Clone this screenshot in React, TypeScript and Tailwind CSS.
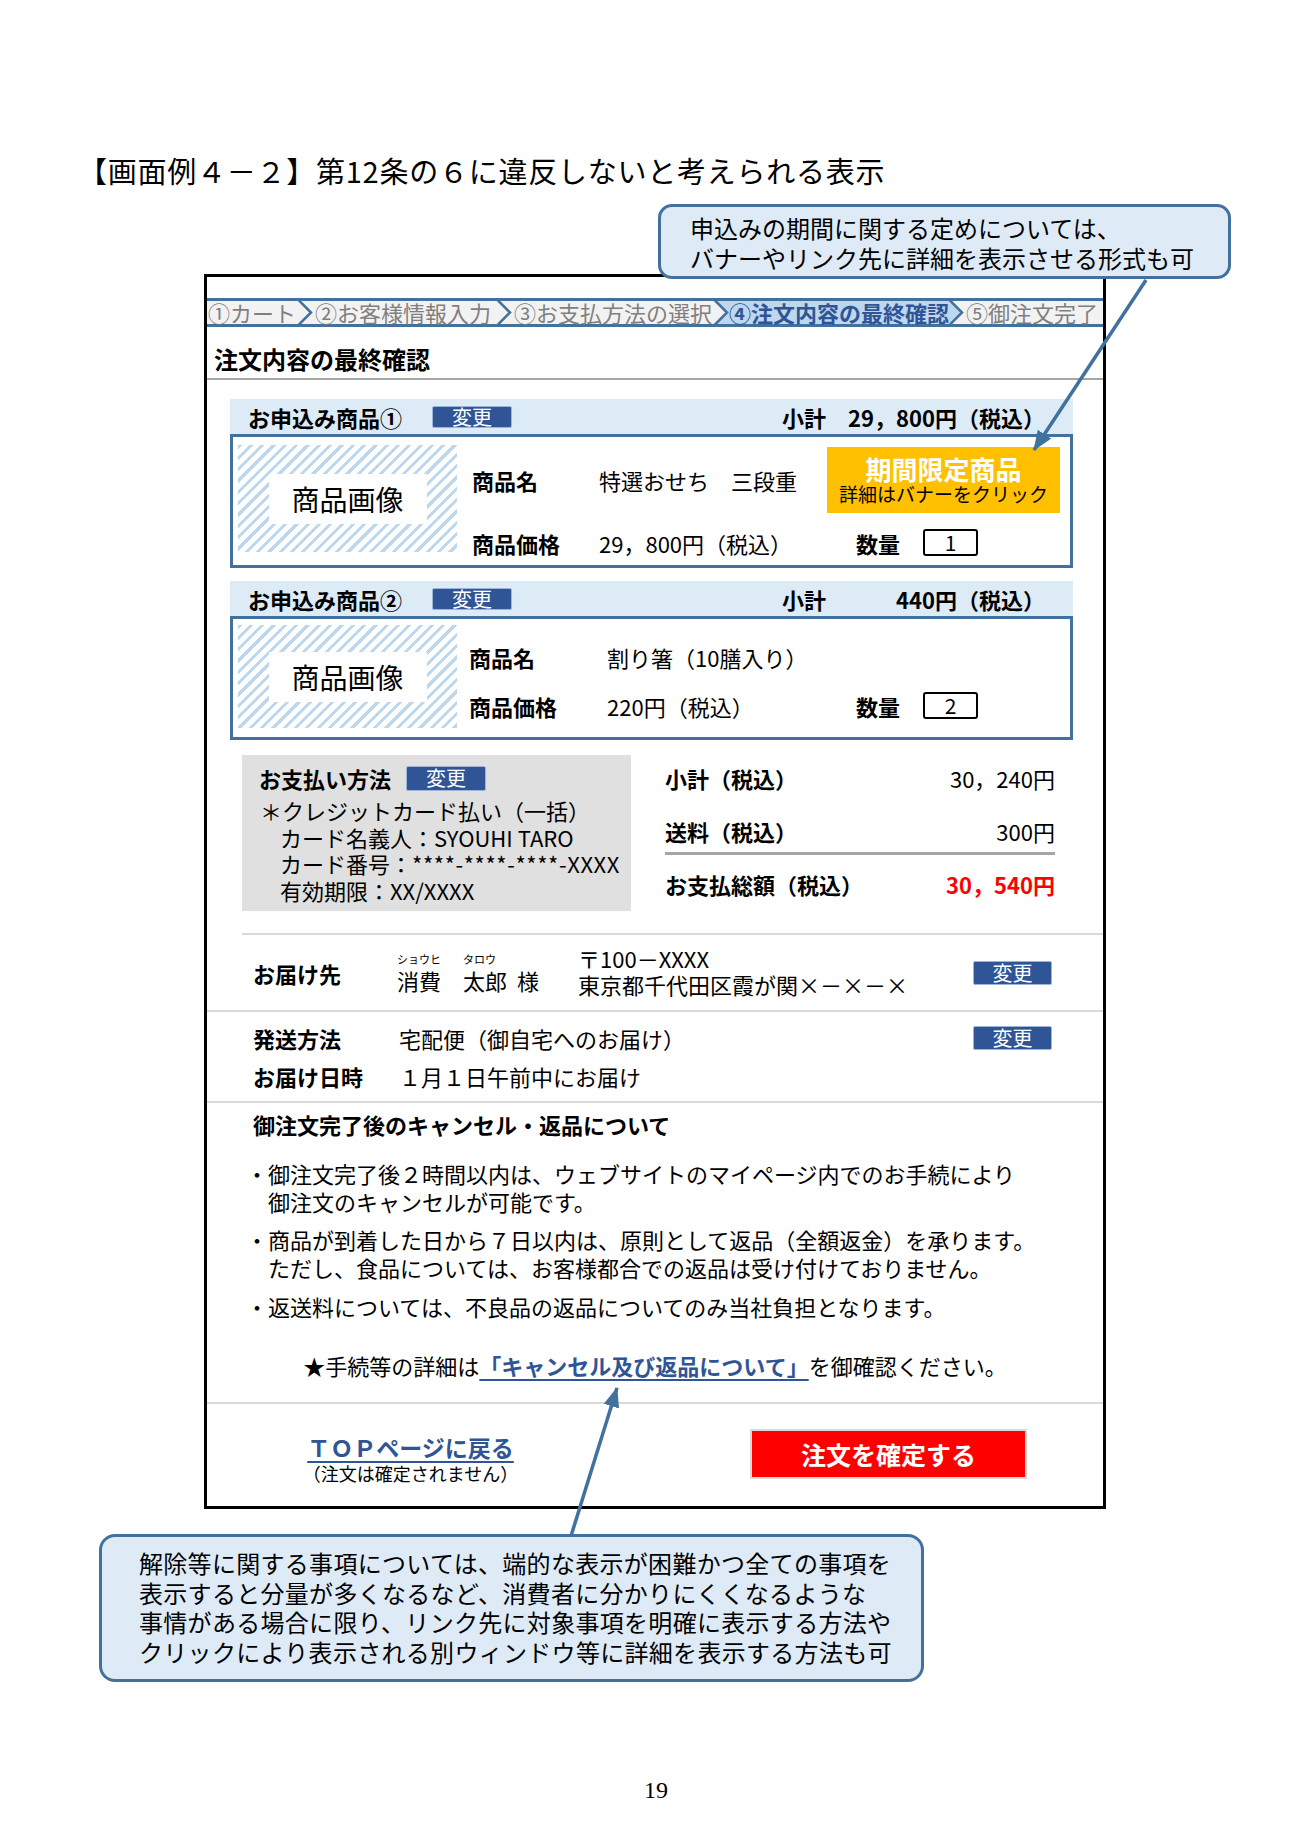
import React from "react";

function Chevron({ left, right }: { left: string; right: string }) {
  return (
    <svg width="15" height="23" viewBox="0 0 15 23" className="block shrink-0">
      <polygon points="0,0 13,11.5 0,23" fill={left} />
      <polygon points="0,0 15,0 15,23 0,23 13,11.5" fill={right} />
      <polyline points="0.5,-1 13,11.5 0.5,24" fill="none" stroke="#41719c" strokeWidth="2.5" />
    </svg>
  );
}

function ChangeBtn({ cls }: { cls: string }) {
  return (
    <span
      className={`flex items-center justify-center bg-[#2f5597] text-white text-[20px] leading-none border border-[#9db4d8] rounded-[2px] ${cls}`}
    >
      変更
    </span>
  );
}

function StepBar() {
  const gray = "#f2f2f2";
  const blue = "#bdd7ee";
  return (
    <div className="flex h-[29px] border-y-[3px] border-[#41719c] bg-[#f2f2f2] text-[22px] leading-[23px] text-[#7f7f7f] whitespace-nowrap">
      <div className="w-[91px] pl-[1px]">①カート</div>
      <Chevron left={gray} right={gray} />
      <div className="w-[184px] pl-[2px]">②お客様情報入力</div>
      <Chevron left={gray} right={gray} />
      <div className="w-[202px] pl-[2px]">③お支払方法の選択</div>
      <Chevron left={gray} right={blue} />
      <div className="w-[220px] bg-[#bdd7ee] font-bold text-[#2f5597]">④注文内容の最終確認</div>
      <Chevron left={blue} right={gray} />
      <div className="flex-1 pl-[2px]">⑤御注文完了</div>
    </div>
  );
}

function ProductImage({ h }: { h: string }) {
  return (
    <div
      className={`w-[219px] ${h} shrink-0 flex items-center justify-center bg-[image:repeating-linear-gradient(135deg,#bdd7ee_0px,#bdd7ee_3px,#ffffff_3px,#ffffff_8px)]`}
    >
      <div className="w-[158px] h-[50px] bg-white flex items-center justify-center text-[28px] leading-none">
        商品画像
      </div>
    </div>
  );
}

function Header({ title, value }: { title: string; value: string }) {
  return (
    <div className="flex items-center h-[35px] bg-[#ddebf7] pl-[18px] pr-[28px]">
      <span className="font-bold text-[22px] leading-none">{title}</span>
      <ChangeBtn cls="ml-[30px] w-[80px] h-[22px]" />
      <div className="ml-auto w-[263px] flex justify-between font-bold text-[22px] leading-none">
        <span>小計</span>
        <span>{value}</span>
      </div>
    </div>
  );
}

function Qty({ n }: { n: string }) {
  return (
    <div className="flex items-center pl-[29px]">
      <span className="font-bold text-[22px] leading-none">数量</span>
      <span className="ml-[23px] w-[55px] h-[27px] border-2 border-black rounded-[3px] flex items-center justify-center text-[21px] leading-none">
        {n}
      </span>
    </div>
  );
}

export default function App() {
  return (
    <div className="relative w-[1300px] min-h-[1838px] bg-white text-black font-['Noto_Sans_CJK_JP',sans-serif]">
      <h1 className="pt-[156px] pl-[78px] text-[29px] leading-[29px] tracking-[0.75px] font-normal whitespace-nowrap">
        【画面例４－２】第12条の６に違反しないと考えられる表示
      </h1>

      {/* Frame */}
      <div className="ml-[204px] mt-[89px] w-[902px] border-[3px] border-black">
        <div className="pt-[21px]">
          <StepBar />
        </div>
        <div className="pt-[20px] pb-[7px] pl-[7px] border-b-2 border-[#a6a6a6] font-bold text-[24px] leading-[24px]">
          注文内容の最終確認
        </div>

        {/* Product 1 */}
        <div className="mt-[19px] ml-[23px] mr-[30px]">
          <Header title="お申込み商品①" value="29，800円（税込）" />
          <div className="h-[134px] border-[3px] border-[#41719c] flex items-start pl-[5px]">
            <div className="mt-[8px]">
              <ProductImage h="h-[107px]" />
            </div>
            <div className="ml-[15px] mt-[10px] grid grid-cols-[127px_228px_233px]">
              <div className="h-[66px] flex items-center font-bold text-[22px] leading-none">商品名</div>
              <div className="h-[66px] flex items-center text-[22px] leading-none whitespace-nowrap">特選おせち　三段重</div>
              <div className="h-[66px] bg-[#ffc000] flex flex-col items-center justify-center">
                <span className="text-white font-bold text-[26px] leading-[28px]">期間限定商品</span>
                <span className="text-[19px] leading-[22px] whitespace-nowrap">詳細はバナーをクリック</span>
              </div>
              <div className="mt-[16px] h-[27px] flex items-center font-bold text-[22px] leading-none">商品価格</div>
              <div className="mt-[16px] h-[27px] flex items-center text-[22px] leading-none whitespace-nowrap">29，800円（税込）</div>
              <div className="mt-[16px] h-[27px]">
                <Qty n="1" />
              </div>
            </div>
          </div>
        </div>

        {/* Product 2 */}
        <div className="mt-[13px] ml-[23px] mr-[30px]">
          <Header title="お申込み商品②" value="440円（税込）" />
          <div className="h-[124px] border-[3px] border-[#41719c] flex items-start pl-[5px]">
            <div className="mt-[6px]">
              <ProductImage h="h-[103px]" />
            </div>
            <div className="ml-[12px] mt-[24px] grid grid-cols-[138px_220px_233px]">
              <div className="h-[28px] flex items-center font-bold text-[22px] leading-none">商品名</div>
              <div className="h-[28px] flex items-center text-[22px] leading-none whitespace-nowrap">割り箸（10膳入り）</div>
              <div className="h-[28px]" />
              <div className="mt-[21px] h-[28px] flex items-center font-bold text-[22px] leading-none">商品価格</div>
              <div className="mt-[21px] h-[28px] flex items-center text-[22px] leading-none whitespace-nowrap">220円（税込）</div>
              <div className="mt-[21px] h-[28px]">
                <Qty n="2" />
              </div>
            </div>
          </div>
        </div>

        {/* Payment + summary */}
        <div className="mt-[15px] ml-[35px] pb-[22px] flex items-start border-b-2 border-[#d9d9d9]">
          <div className="w-[389px] h-[156px] bg-[#e0e0e0] pl-[17px] pt-[11px]">
            <div className="flex items-center h-[24px]">
              <span className="font-bold text-[22px] leading-none">お支払い方法</span>
              <ChangeBtn cls="ml-[15px] w-[80px] h-[25px]" />
            </div>
            <div className="mt-[7px] text-[22px] leading-[26.5px] whitespace-nowrap">
              <div className="pl-[1px]">＊クレジットカード払い（一括）</div>
              <div className="pl-[21px]">カード名義人：SYOUHI TARO</div>
              <div className="pl-[21px]">
                カード番号：<span className="tracking-[0.6px]">****-****-****-XXXX</span>
              </div>
              <div className="pl-[21px]">有効期限：XX/XXXX</div>
            </div>
          </div>
          <div className="ml-[34px] w-[390px] pt-[11px]">
            <div className="flex justify-between items-center h-[24px]">
              <span className="font-bold text-[22px] leading-none">小計（税込）</span>
              <span className="text-[22px] leading-none">30，240円</span>
            </div>
            <div className="mt-[29px] flex justify-between items-center h-[24px]">
              <span className="font-bold text-[22px] leading-none">送料（税込）</span>
              <span className="text-[22px] leading-none">300円</span>
            </div>
            <div className="mt-[9px] h-[3px] bg-[#a6a6a6]" />
            <div className="mt-[17px] flex justify-between items-center h-[24px]">
              <span className="font-bold text-[22px] leading-none">お支払総額（税込）</span>
              <span className="font-bold text-[22px] leading-none text-[#ff0000]">30，540円</span>
            </div>
          </div>
        </div>

        {/* Delivery */}
        <div className="h-[77px] flex items-center pl-[46px] pr-[51px] border-b-2 border-[#d9d9d9]">
          <span className="w-[144px] font-bold text-[22px] leading-none">お届け先</span>
          <div className="w-[181px]">
            <div className="flex text-[11px] leading-[12px]">
              <span className="w-[66px]">ショウヒ</span>
              <span>タロウ</span>
            </div>
            <div className="mt-[2px] text-[22px] leading-[26px] whitespace-nowrap">
              消費　太郎<span className="ml-[10px]">様</span>
            </div>
          </div>
          <div className="-mt-[4px] text-[22px] leading-[26px] whitespace-nowrap">
            <div>〒100－XXXX</div>
            <div>東京都千代田区霞が関×－×－×</div>
          </div>
          <ChangeBtn cls="ml-auto w-[79px] h-[24px]" />
        </div>

        {/* Shipping */}
        <div className="pl-[46px] pr-[51px] pt-[13px] pb-[12px] border-b-2 border-[#d9d9d9]">
          <div className="flex items-center h-[26px]">
            <span className="w-[146px] font-bold text-[22px] leading-none">発送方法</span>
            <span className="text-[22px] leading-none">宅配便（御自宅へのお届け）</span>
            <ChangeBtn cls="ml-auto w-[79px] h-[24px]" />
          </div>
          <div className="mt-[12px] flex items-center h-[26px]">
            <span className="w-[146px] font-bold text-[22px] leading-none">お届け日時</span>
            <span className="text-[22px] leading-none">１月１日午前中にお届け</span>
          </div>
        </div>

        {/* Cancel */}
        <div className="pt-[8px] pb-[23px] border-b-2 border-[#d9d9d9]">
          <div className="pl-[46px] font-bold text-[22px] leading-[26px]">御注文完了後のキャンセル・返品について</div>
          <div className="mt-[22px] pl-[39px] text-[22px] leading-[28px] whitespace-nowrap">
            <div className="flex">
              <span className="w-[22px] shrink-0">・</span>
              <div>
                <div>御注文完了後２時間以内は、ウェブサイトのマイページ内でのお手続により</div>
                <div>御注文のキャンセルが可能です。</div>
              </div>
            </div>
            <div className="flex mt-[10px]">
              <span className="w-[22px] shrink-0">・</span>
              <div>
                <div>商品が到着した日から７日以内は、原則として返品（全額返金）を承ります。</div>
                <div>ただし、食品については、お客様都合での返品は受け付けておりません。</div>
              </div>
            </div>
            <div className="flex mt-[11px]">
              <span className="w-[22px] shrink-0">・</span>
              <div>返送料については、不良品の返品についてのみ当社負担となります。</div>
            </div>
          </div>
          <div className="mt-[31px] text-center text-[22px] leading-[28px] whitespace-nowrap">
            ★手続等の詳細は
            <span className="font-bold text-[#2f5597] underline underline-offset-4">「キャンセル及び返品について」</span>
            を御確認ください。
          </div>
        </div>

        {/* Bottom actions */}
        <div className="flex items-start pb-[21px]">
          <div className="w-[407px] pt-[29px] text-center">
            <div className="font-bold text-[23px] leading-[28px] text-[#2f5597] underline underline-offset-4">ＴＯＰページに戻る</div>
            <div className="text-[18px] leading-[24px]">（注文は確定されません）</div>
          </div>
          <div className="ml-[136px] mt-[25px] w-[277px] h-[50px] border-2 border-[#d9d9d9] bg-[#ff0000] flex items-center justify-center text-white font-bold text-[25px] leading-none">
            注文を確定する
          </div>
        </div>
      </div>

      {/* Bottom callout */}
      <div className="ml-[99px] mt-[25px] w-[825px] h-[148px] border-[3px] border-[#41719c] rounded-[16px] bg-[#deebf7] pl-[37px] pt-[11px] text-[24px] leading-[29.5px] tracking-[0.3px] whitespace-nowrap">
        <div>解除等に関する事項については、端的な表示が困難かつ全ての事項を</div>
        <div>表示すると分量が多くなるなど、消費者に分かりにくくなるような</div>
        <div>事情がある場合に限り、リンク先に対象事項を明確に表示する方法や</div>
        <div>クリックにより表示される別ウィンドウ等に詳細を表示する方法も可</div>
      </div>

      <div className="mt-[96px] text-center w-[1312px] font-['Liberation_Serif',serif] text-[24px] leading-[24px]">19</div>

      {/* Arrows */}
      <svg className="absolute left-0 top-0 pointer-events-none" width="1300" height="1838" viewBox="0 0 1300 1838">
        <defs>
          <marker id="ah" markerUnits="userSpaceOnUse" markerWidth="20" markerHeight="16" refX="19" refY="8" orient="auto">
            <path d="M0,0 L20,8 L0,16 z" fill="#41719c" />
          </marker>
        </defs>
        <line x1="1146" y1="280" x2="1034" y2="450" stroke="#41719c" strokeWidth="3.5" markerEnd="url(#ah)" />
        <line x1="571" y1="1536" x2="617" y2="1388" stroke="#41719c" strokeWidth="3.5" markerEnd="url(#ah)" />
      </svg>

      {/* Top callout */}
      <div className="absolute left-[658px] top-[204px] w-[573px] h-[75px] border-[3px] border-[#41719c] rounded-[14px] bg-[#deebf7] pl-[29px] pt-[6px] text-[24px] leading-[30px] whitespace-nowrap">
        <div>申込みの期間に関する定めについては、</div>
        <div>バナーやリンク先に詳細を表示させる形式も可</div>
      </div>
    </div>
  );
}
